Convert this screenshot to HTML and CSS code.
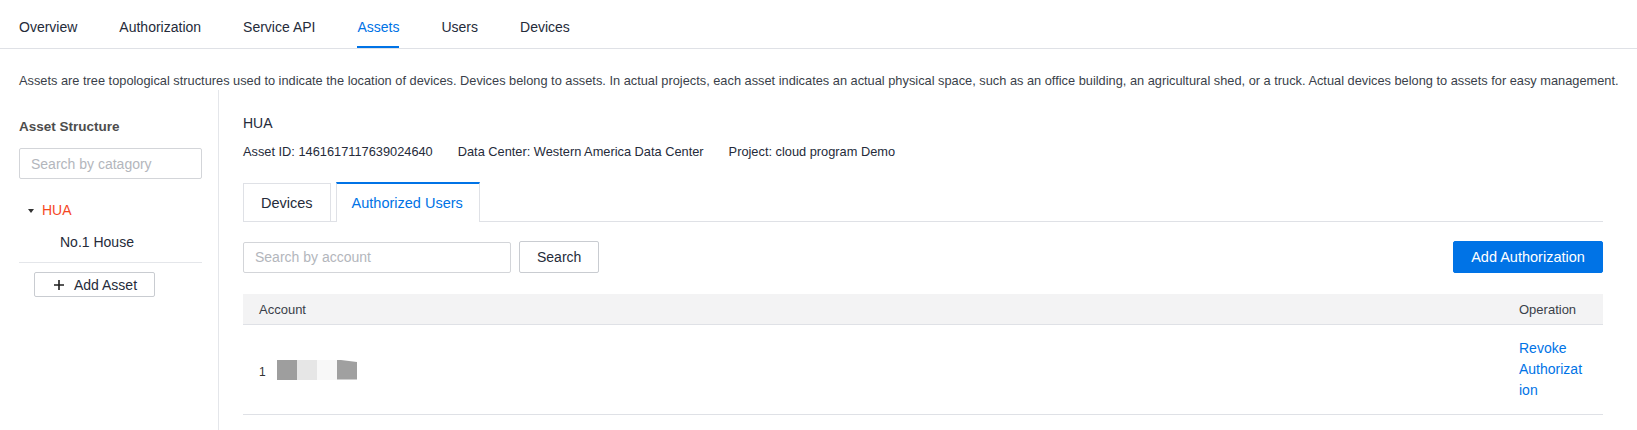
FILE: index.html
```html
<!DOCTYPE html>
<html lang="en">
<head>
<meta charset="utf-8">
<title>Assets</title>
<link rel="stylesheet" href="styles.css">
</head>
<body>
<nav class="topnav">
  <a class="navtab">Overview</a>
  <a class="navtab">Authorization</a>
  <a class="navtab">Service API</a>
  <a class="navtab active">Assets</a>
  <a class="navtab">Users</a>
  <a class="navtab">Devices</a>
</nav>
<p class="desc">Assets are tree topological structures used to indicate the location of devices. Devices belong to assets. In actual projects, each asset indicates an actual physical space, such as an office building, an agricultural shed, or a truck. Actual devices belong to assets for easy management.</p>
<div class="layout">
  <aside class="sidebar">
    <h3 class="side-title">Asset Structure</h3>
    <input class="side-search" type="text" placeholder="Search by catagory">
    <ul class="tree">
      <li class="tree-row root"><span class="caret"></span><span class="tree-label">HUA</span></li>
      <li class="tree-row child"><span class="tree-label">No.1 House</span></li>
    </ul>
    <div class="side-divider"></div>
    <button class="add-asset"><svg class="plus" viewBox="0 0 10 10" width="10" height="10"><path d="M5 0v10M0 5h10" stroke="#1f1f1f" stroke-width="1.6" fill="none"/></svg><span>Add Asset</span></button>
  </aside>
  <main class="main">
    <div class="asset-name">HUA</div>
    <div class="asset-meta">
      <span>Asset ID: 1461617117639024640</span>
      <span>Data Center: Western America Data Center</span>
      <span>Project: cloud program Demo</span>
    </div>
    <div class="subtabs">
      <div class="subtab">Devices</div>
      <div class="subtab active">Authorized Users</div>
    </div>
    <div class="toolbar">
      <input class="acct-search" type="text" placeholder="Search by account">
      <button class="btn">Search</button>
      <div class="spacer"></div>
      <button class="btn primary">Add Authorization</button>
    </div>
    <div class="table">
      <div class="thead">
        <div class="col-account">Account</div>
        <div class="col-op">Operation</div>
      </div>
      <div class="trow">
        <div class="col-account acct-cell">
          <span class="acct-num">1</span>
          <span class="mask m1"></span><span class="mask m2"></span><span class="mask m3"></span><span class="mask m4"></span>
        </div>
        <div class="col-op"><a class="link">Revoke Authorization</a></div>
      </div>
    </div>
  </main>
</div>
</body>
</html>
```
FILE: styles.css
```css
* { box-sizing: border-box; }
html, body { margin: 0; padding: 0; background: #fff; }
body {
  font-family: "Liberation Sans", Arial, sans-serif;
  color: #252b3a;
  width: 1637px;
  height: 430px;
  overflow: hidden;
}
.topnav {
  display: flex;
  gap: 42px;
  height: 49px;
  padding-left: 19px;
  border-bottom: 1px solid #dfe1e6;
}
.navtab {
  display: block;
  height: 48px;
  padding-top: 19px;
  font-size: 14px;
  line-height: 17px;
  color: #252b3a;
}
.navtab.active {
  color: #0073e6;
  box-shadow: inset 0 -2px 0 #0073e6;
}
.desc {
  margin: 0;
  height: 41px;
  padding: 23px 0 0 19px;
  font-size: 12.8px;
  line-height: 18px;
  color: #3a3f4a;
  white-space: nowrap;
  overflow: hidden;
}
.layout {
  display: flex;
  height: 340px;
}
.sidebar {
  width: 219px;
  flex: none;
  border-right: 1px solid #e4e6ea;
  padding: 27px 0 0 19px;
}
.side-title {
  margin: 0;
  font-size: 13.5px;
  line-height: 20px;
  font-weight: bold;
  color: #4d4d4d;
}
.side-search {
  display: block;
  margin-top: 11px;
  width: 183px;
  height: 31px;
  border: 1px solid #d3d5d9;
  border-radius: 2px;
  padding: 0 11px;
  font-family: inherit;
  font-size: 14px;
  outline: none;
}
.side-search::placeholder, .acct-search::placeholder { color: #b3b6bc; }
.tree {
  list-style: none;
  margin: 15px 0 0;
  padding: 0;
  width: 183px;
}
.tree-row {
  display: flex;
  align-items: center;
  height: 32px;
  font-size: 14px;
}
.tree-row.root { padding-left: 9px; }
.tree-row.root .tree-label { color: #f5481f; }
.tree-row.child { padding-left: 41px; color: #252b3a; }
.caret {
  width: 0; height: 0;
  border-left: 3.5px solid transparent;
  border-right: 3.5px solid transparent;
  border-top: 4px solid #333;
  margin-right: 8px;
  margin-top: 1px;
}
.side-divider {
  width: 183px;
  height: 1px;
  background: #e4e6ea;
  margin-top: 4px;
}
.add-asset {
  display: flex;
  align-items: center;
  margin: 9px 0 0 15px;
  width: 121px;
  height: 25px;
  padding: 0 0 0 19px;
  border: 1px solid #c9ccd1;
  border-radius: 2px;
  background: #fff;
  font-family: inherit;
  font-size: 14px;
  color: #252b3a;
}
.plus { margin-right: 10px; }
.main {
  flex: 1;
  padding: 23px 34px 0 24px;
}
.asset-name {
  font-size: 14px;
  line-height: 20px;
  color: #252b3a;
}
.asset-meta {
  display: flex;
  gap: 25px;
  margin-top: 10px;
  font-size: 12.8px;
  line-height: 18px;
  color: #252b3a;
}
.subtabs {
  display: flex;
  align-items: flex-end;
  gap: 5px;
  margin-top: 21px;
  height: 40px;
  border-bottom: 1px solid #dfe1e6;
}
.subtab {
  height: 38px;
  padding: 0 17px;
  border: 1px solid #dfe1e6;
  border-bottom: none;
  display: flex;
  align-items: center;
  font-size: 14.5px;
  color: #252b3a;
  background: #fff;
}
.subtab.active {
  height: 40px;
  margin-bottom: -1px;
  border-top: 2px solid #0073e6;
  color: #0073e6;
  padding: 0 16px 0 15px;
}
.toolbar {
  display: flex;
  align-items: center;
  margin-top: 19px;
  height: 32px;
}
.acct-search {
  width: 268px;
  height: 31px;
  border: 1px solid #d3d5d9;
  border-radius: 2px;
  padding: 0 11px;
  font-family: inherit;
  font-size: 14px;
  outline: none;
}
.btn {
  height: 32px;
  border: 1px solid #c9ccd1;
  border-radius: 2px;
  background: #fff;
  font-family: inherit;
  font-size: 14px;
  color: #252b3a;
  padding: 0 17px;
  margin-left: 8px;
}
.btn.primary {
  background: #0073e6;
  border-color: #0073e6;
  color: #fff;
  width: 150px;
  padding: 0;
  font-size: 14.5px;
}
.spacer { flex: 1; }
.table { margin-top: 21px; }
.thead {
  display: flex;
  height: 31px;
  align-items: center;
  background: #f3f3f4;
  border-bottom: 1px solid #dfe1e6;
  font-size: 13px;
  color: #3a3f4a;
}
.trow {
  display: flex;
  align-items: center;
  height: 90px;
  border-bottom: 1px solid #dfe1e6;
}
.col-account { flex: 1; padding-left: 16px; }
.col-op { width: 84px; padding-left: 0; padding-right: 17px; flex: none; }
.acct-cell { display: flex; align-items: center; }
.acct-num { font-size: 12px; color: #333; width: 18px; margin-top: 5px; }
.mask { display: block; width: 20px; height: 20px; }
.m1 { background: #9e9e9e; }
.m2 { background: #e6e6e6; }
.m3 { background: #f8f8f8; }
.m4 { background: #a0a0a0; clip-path: polygon(0 0, 100% 12%, 100% 100%, 0 100%); }
.link {
  display: block;
  width: 66px;
  font-size: 14px;
  line-height: 21px;
  color: #0073e6;
  overflow-wrap: break-word;
}
```
